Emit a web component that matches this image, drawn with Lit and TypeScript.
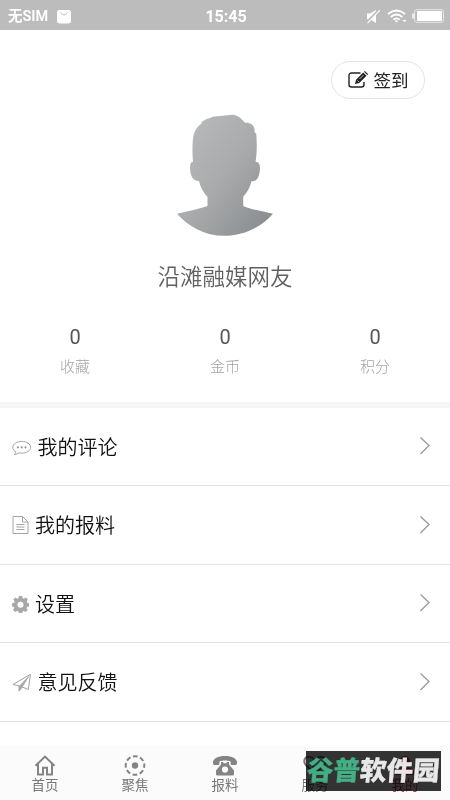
import { LitElement, html, svg, css } from "lit";
import { customElement } from "lit/decorators.js";

const icons = {
  comment: svg`<svg width="20" height="18" viewBox="0 0 20 18" fill="none" stroke="#a4a4a4" stroke-width="1"><path d="M9.700 2.400c4.900 0 8.900 2.500 8.900 5.900s-4 5.900-8.900 5.900c-1 0-2-.1-2.900-.3-1.300 1-2.800 1.600-4.600 1.700.9-.9 1.600-1.700 1.600-2.900C1.900 11.700.8 10.100.8 8.300c0-3.400 4-5.900 8.900-5.900z"/><g fill="#999" stroke="none"><circle cx="5.900" cy="8.300" r="1.100"/><circle cx="9.700" cy="8.300" r="1.100"/><circle cx="13.500" cy="8.300" r="1.100"/></g></svg>`,
  doc: svg`<svg width="17" height="20" viewBox="0 0 17 20" fill="none" stroke="#a4a4a4" stroke-width="1"><path d="M1 1.500h9.500l5.500 5.500v11.500H1zM10.500 1.500V7H16M4.500 9.500h8M4.500 12h8M4.500 14.500h8"/></svg>`,
  gear: svg`<svg width="17" height="18" viewBox="0 0 17 18"><path fill="#a8a8a8" fill-rule="evenodd" d="M6.800 1h3.400l.5 2.200 1.100.5 2-1.200 2.100 2.100-1.200 2 .5 1.100 2 .5v3.200l-2.200.5-.5 1.100 1.300 2-2.100 2.100-2-1.200-1.100.4-.4 1.900H6.800l-.5-1.900-1.200-.4-2 1.200L1 15l1.300-2-.4-1.100L0 11.400V8.200l2.200-.5.500-1.100L1.300 4.600l2.100-2.100 2 1.200 1.100-.5zM8.500 6.700a3 3 0 1 0 0 6 3 3 0 0 0 0-6z"/></svg>`,
  plane: svg`<svg width="20" height="20" viewBox="0 0 20 20"><path fill="none" stroke="#a4a4a4" d="M1 11.500 18.500 1.300l-2.200 15.200-6-2.500L7 18v-5z" stroke-linejoin="round"/><path fill="#a8a8a8" d="M7 13 18.300 1.500 10.600 14 7 18.500z"/></svg>`,
  home: svg`<svg width="22" height="21" viewBox="0 0 22 21" fill="none" stroke="#848484" stroke-width="2"><path d="M1.500 10.800 11 1.600l9.500 9.200M4 9v10.500h5v-6.700h4v6.700h5V9"/></svg>`,
  focus: svg`<svg width="22" height="21" viewBox="0 0 22 21"><circle cx="11" cy="10.500" r="9.300" fill="none" stroke="#848484" stroke-width="2" stroke-dasharray="4.700 2.600" stroke-dashoffset="2.350"/><circle cx="11" cy="10.500" r="3.200" fill="#848484"/></svg>`,
  phone: svg`<svg width="26" height="21" viewBox="0 0 26 21" fill="#848484"><path d="M1 8.600C.2 4 5.500 1 13 1s12.800 3 12 7.600q-.2 1.400-1.500 1.400h-3.700q-1.200 0-1.200-1.200V6.600C15.500 5.200 10.500 5.200 7.400 6.600v2.200Q7.400 10 6.200 10H2.500Q1.200 10 1 8.600z"/><path fill-rule="evenodd" d="M9 7h2.300v1.200h3.400V7H17v2.500l5 6V19q0 1.500-1.500 1.500h-15Q4 20.500 4 19v-3.500l5-6zM13 11.500a3.100 3.100 0 1 0 0 6.200 3.100 3.100 0 0 0 0-6.200z"/></svg>`,
  service: svg`<svg width="26" height="21" viewBox="0 0 26 21" fill="none" stroke="#777" stroke-width="2"><path d="M13 18.500 4 10.200C.5 6 3 1.800 7 1.800c3 0 4.500 1.700 6 4.200 1.500-2.500 3-4.200 6-4.200 4 0 6.500 4.200 3 8.400zM8 9l5 4.500L18 9"/></svg>`,
  me: svg`<svg width="22" height="21" viewBox="0 0 22 21" fill="#d8444d"><circle cx="11" cy="6" r="5"/><path d="M1 20q0-8 10-8t10 8z"/></svg>`,
};

const stats = ["收藏", "金币", "积分"];
const rows = [
  { icon: icons.comment, label: "我的评论", gap: "wide" },
  { icon: icons.doc, label: "我的报料", gap: "" },
  { icon: icons.gear, label: "设置", gap: "" },
  { icon: icons.plane, label: "意见反馈", gap: "wide" },
];
const tabs = [
  { icon: icons.home, label: "首页" },
  { icon: icons.focus, label: "聚焦" },
  { icon: icons.phone, label: "报料" },
  { icon: icons.service, label: "服务" },
  { icon: icons.me, label: "我的", active: true },
];

@customElement("app-root")
export class AppRoot extends LitElement {
  static styles = css`
    :host { display: flex; flex-direction: column; position: relative; isolation: isolate; width: 450px; height: 800px; overflow: hidden; background: #fff; font-family: Roboto, "Noto Sans CJK SC", sans-serif; color: #222; }
    * { box-sizing: border-box; }
    svg { display: block; flex: none; }
    .status { height: 30px; flex: none; background: #bcbcbc; color: #fff; display: grid; grid-template-columns: 1fr auto 1fr; align-items: center; padding: 1px 6px 0 8px; font-size: 15px; font-weight: 500; line-height: 28px; }
    .left, .right { display: flex; align-items: center; }
    .left { gap: 9px; font-size: 14.500px; font-weight: 600; height: 26px; line-height: 26px; }
    .left span { padding-top: 2px; }
    .right { justify-content: flex-end; gap: 6px; height: 26px; }
    .right .battery { margin-left: -1px; }
    .time { font-size: 16px; font-weight: 700; padding-top: 2px; }
    .profile { height: 372px; flex: none; display: flex; flex-direction: column; align-items: center; }
    .sign { align-self: flex-end; margin: 31px 25px 0 0; width: 94px; height: 38px; border: 1px solid #e4e4e4; border-radius: 19px; display: flex; align-items: center; justify-content: center; gap: 5px; font-size: 17.500px; line-height: 34px; }
    .sign span { padding-top: 2px; }
    .avatar { margin-top: 15px; }
    .name { margin-top: 25px; font-size: 22.500px; line-height: 32px; color: #606060; font-weight: 350; }
    .stats { display: grid; grid-template-columns: repeat(3, 1fr); width: 100%; margin-top: 31px; text-align: center; }
    .num { font-size: 20px; line-height: 26px; color: #555; }
    .cap { font-size: 15px; line-height: 22px; margin-top: 6px; color: #a4a4a4; font-weight: 300; }
    .band { height: 6px; flex: none; background: #f5f5f5; }
    .list { flex: 1; margin-top: -.5px; }
    .row { height: 78.500px; display: flex; align-items: center; gap: 7px; padding: 0 19px 0 12px; border-bottom: 1px solid #e3e3e3; font-size: 20px; line-height: 30px; font-weight: 350; color: #111; }
    .row > svg:first-child { margin-top: 1px; }
    .row.wide > svg:first-child { margin-top: 3px; }
    .row.wide { gap: 6.500px; }
    .label { flex: 1; padding-top: 3px; margin-left: -1px; }
    .tabs { height: 54px; flex: none; background: #fbfbfb; display: grid; grid-template-columns: repeat(5, 1fr); }
    .tab { display: flex; flex-direction: column; align-items: center; padding-top: 9px; font-size: 13.500px; line-height: 18px; color: #777; }
    .tab.active { color: #c43a42; }
    .mark { position: absolute; left: 306px; top: 751px; width: 135px; height: 40px; color: #f8f8f8; display: flex; align-items: center; justify-content: center; font-size: 26.500px; line-height: 38px; font-weight: 900; white-space: nowrap; }
    .mark::before { content: ""; position: absolute; inset: 0; background: #343434; mix-blend-mode: multiply; }
    .mark span { transform: skewX(-5deg); opacity: .92; -webkit-text-stroke: .3px currentColor; }
    .green { color: #46b98b; }
  `;

  render() {
    return html`
      <div class="status">
        <div class="left"><span>无SIM</span>
          <svg width="14" height="15" viewBox="0 0 14 15"><rect y="1" width="14" height="13.500" rx="2.500" fill="#fff"/><path d="M3.500 3.500q3.500 5 7 0" fill="none" stroke="#bcbcbc"/></svg>
        </div>
        <span class="time">15:45</span>
        <div class="right">
          <svg width="15" height="15" viewBox="0 0 15 15"><path fill="#fff" d="M1 4.500h3l6-3.500v13l-6-3.800H1z"/><path d="M0 14 14 0" stroke="#bcbcbc" stroke-width="2.500"/><path d="M1.500 14.200 14 1.200" stroke="#fff" stroke-width="1.200"/></svg>
          <svg width="20" height="14" viewBox="0 0 20 14" fill="none" stroke="#fff" stroke-width="1.700"><path d="M1 5q8.500-7 17 0M3.700 8q5.800-5 11.600 0M6.300 10.600q3.200-2.600 6.400 0"/><path d="m7.500 11.500 2 2 2-2zM15.500 11h4l-2 2.300z" fill="#fff" stroke="none"/></svg>
          <svg class="battery" width="32" height="14" viewBox="0 0 32 14"><rect x="2.500" y=".7" width="29" height="12.600" rx="2.500" fill="none" stroke="#e8e8e8"/><rect x="5" y="2" width="25" height="10" rx="1" fill="#fff"/><path d="M1 4.500v5" stroke="#fff" stroke-width="1.500"/></svg>
        </div>
      </div>
      <div class="profile">
        <div class="sign">
          <svg width="21" height="18" viewBox="0 0 21 18"><path d="M12.500 2H3.500Q1 2 1 4.500v9Q1 16 3.500 16h10q2.500 0 2.500-2.500V11" fill="none" stroke="#222" stroke-width="1.400"/><path d="m7 13 1-4.300 7.200-7.200 3.300 3.300-7.200 7.200zM16 .8l.9-.8 3.300 3.200-.9.900z" fill="#222"/><path d="m9.500 9.500 1.600 1.600M11.500 8l4-4" stroke="#fff" stroke-width=".7"/></svg>
          <span>签到</span>
        </div>
        <svg class="avatar" width="96" height="122" viewBox="0 0 96 122">
          <defs><linearGradient id="g" x1="0" y1="0" x2="1" y2="1"><stop offset="0" stop-color="#bbbcbd"/><stop offset=".5" stop-color="#a8aaab"/><stop offset="1" stop-color="#85888b"/></linearGradient></defs>
          <path fill="url(#g)" d="M16 53.500C15 43 15.500 31 16.500 26c1-5 4.500-10 8.500-13l-1-.2c3-3.500 7-4.800 11-5.300l-1.500-.4C40 5.900 43 5.900 48 5.300l7-.8c7 .4 9.500 4.500 13 8.200 6-.3 10.500 3 9.500 10l1.700 1.300C80 32 80 46 78.500 53.500c4 0 5 4.500 4.300 9-.5 5-1.800 11.500-8.300 11.300-1.300 6-4.500 12-8.300 16V99.500c9 4 20 5.500 29.800 8C85 121 67 130.500 47 130.500c-19 0-36-10-47-23 9.800-2.500 21-4.500 30.500-8V90c-4-4-7.200-10-8.500-16.500-6.500 0-8.300-6-8.800-11-.5-4.500.3-9 2.800-9z" transform="translate(0 -3.500) scale(1 .96)"/>
        </svg>
        <div class="name">沿滩融媒网友</div>
        <div class="stats">${stats.map((s) => html`<div><div class="num">0</div><div class="cap">${s}</div></div>`)}</div>
      </div>
      <div class="band"></div>
      <div class="list">
        ${rows.map((r) => html`<div class="row ${r.gap}">${r.icon}<span class="label">${r.label}</span>
          <svg width="12" height="20" viewBox="0 0 12 20"><path d="m1.500 1.500 8.500 8-8.500 8.500" fill="none" stroke="#999" stroke-width="1.300"/></svg></div>`)}
      </div>
      <div class="tabs">${tabs.map((t) => html`<div class="tab ${t.active ? "active" : ""}">${t.icon}<span>${t.label}</span></div>`)}</div>
      <div class="mark"><span class="green">谷普</span><span>软件园</span></div>
    `;
  }
}
